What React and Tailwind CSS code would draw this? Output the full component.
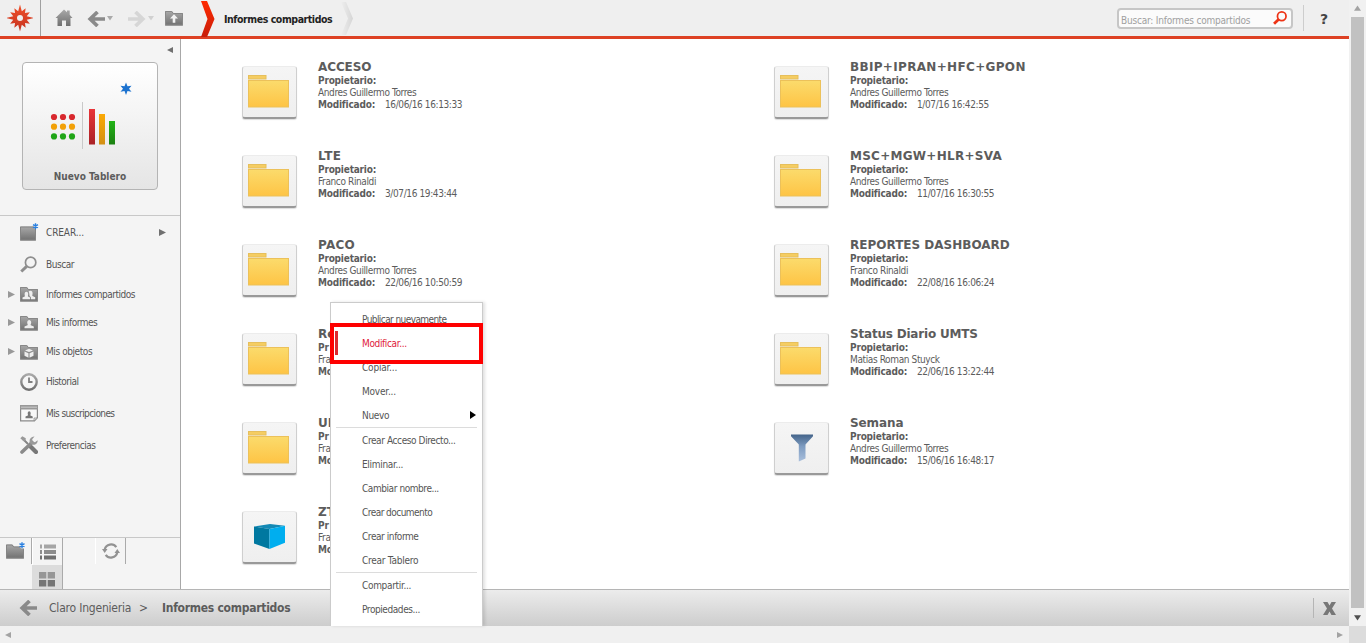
import React from 'react';

const GREY = 'url(#grey)';

function Defs() {
  return (
    <svg width="0" height="0" className="absolute">
      <defs>
        <linearGradient id="grey" x1="0" y1="0" x2="0" y2="1">
          <stop offset="0" stopColor="#a9a9a9" />
          <stop offset="1" stopColor="#707070" />
        </linearGradient>
        <linearGradient id="folder" x1="0" y1="0" x2="0" y2="1">
          <stop offset="0" stopColor="#fbdb6c" />
          <stop offset="1" stopColor="#fec445" />
        </linearGradient>
        <linearGradient id="funnel" x1="0" y1="0" x2="0" y2="1">
          <stop offset="0" stopColor="#44648a" />
          <stop offset="0.45" stopColor="#7f9dc2" />
          <stop offset="1" stopColor="#a9bfdc" />
        </linearGradient>
        <linearGradient id="chev" x1="0" y1="0" x2="0" y2="1">
          <stop offset="0" stopColor="#ff2a00" />
          <stop offset="1" stopColor="#c81e0a" />
        </linearGradient>
        <linearGradient id="chevGrey" x1="0" y1="0" x2="1" y2="0">
          <stop offset="0" stopColor="#eeeeee" />
          <stop offset="1" stopColor="#d6d6d6" />
        </linearGradient>
        <linearGradient id="logo" x1="0" y1="0" x2="0" y2="1">
          <stop offset="0" stopColor="#f0502a" />
          <stop offset="1" stopColor="#c5321f" />
        </linearGradient>
        <linearGradient id="barRed" x1="0" y1="0" x2="0" y2="1">
          <stop offset="0" stopColor="#e93439" />
          <stop offset="1" stopColor="#a92226" />
        </linearGradient>
        <linearGradient id="barOrange" x1="0" y1="0" x2="0" y2="1">
          <stop offset="0" stopColor="#fba905" />
          <stop offset="1" stopColor="#d39015" />
        </linearGradient>
        <linearGradient id="barGreen" x1="0" y1="0" x2="0" y2="1">
          <stop offset="0" stopColor="#22b416" />
          <stop offset="1" stopColor="#1c8012" />
        </linearGradient>
      </defs>
    </svg>
  );
}

const starPoints = (n, cx, cy, outer, inner) =>
  Array.from({ length: n * 2 }, (_, i) => {
    const r = i % 2 ? inner : i % 6 ? outer * 0.84 : outer;
    const a = (Math.PI * i) / n - Math.PI / 2;
    return `${(cx + r * Math.cos(a)).toFixed(2)},${(cy + r * Math.sin(a)).toFixed(2)}`;
  }).join(' ');

function Logo() {
  return (
    <svg width="26" height="28" viewBox="0 0 26 28">
      <polygon points={starPoints(12, 13, 14, 13.5, 7)} fill="url(#logo)" />
      <circle cx="13" cy="14" r="3" fill="#efefef" />
    </svg>
  );
}

function HomeIcon() {
  return (
    <svg width="18" height="18" viewBox="0 0 18 18">
      <path d="M9 .5 12 3.300V1.500h2.700v4.300L17.500 9H15.500v8H11v-5.500H7V17H2.500V9H.5z" fill={GREY} />
    </svg>
  );
}

function ArrowIcon({ flip, color = '#8a8a8a' }) {
  return (
    <svg width="18" height="16" viewBox="0 0 18 16" className={flip ? 'scale-x-[-1]' : ''}>
      <path d="M10.500 1 3.200 8l7.300 7M3.500 8H18" fill="none" stroke={color} strokeWidth="3.700" />
    </svg>
  );
}

function Triangle({ dir, className, size = 6 }) {
  const d = {
    left: 'M6 0v6L0 3z',
    right: 'M0 0v6l6-3z',
    down: 'M0 1h6L3 5.500z',
    up: 'M0 5h6L3 .5z',
  }[dir];
  return (
    <svg width={size} height={size} viewBox="0 0 6 6" preserveAspectRatio="none" className={className}>
      <path d={d} fill="currentColor" />
    </svg>
  );
}

function FolderShape({ children }) {
  return (
    <svg width="18" height="16" viewBox="0 0 18 16">
      <path d="M0 1h7l1.500 2H18v12.500H0z" fill={GREY} />
      <path d="M.5 15V1.500h6.200l1.600 2h9.200V15z" fill="none" stroke="#888" />
      {children}
    </svg>
  );
}

const Spark = ({ x, y }) => (
  <path d={`M${x} ${y - 3}v6M${x - 2.5} ${y - 1.5}l5 3M${x + 2.5} ${y - 1.5}l-5 3`} stroke="#2a80e0" strokeWidth="1.400" fill="none" />
);

const CreateIcon = () => (
  <svg width="19" height="18" viewBox="0 0 19 18">
    <path d="M0 3.500h16V17.500H0z" fill={GREY} />
    <path d="M.5 4v13h15V4z" fill="none" stroke="#858585" />
    <path d="M13 0h6v6h-4z" fill="#f4f4f4" />
    <Spark x={15.5} y={3.2} />
  </svg>
);

const NewFolderIcon = () => (
  <svg width="20" height="18" viewBox="0 0 20 18">
    <path d="M0 2.500h6.500l1.500 2H18v12H0z" fill={GREY} />
    <path d="M.5 16V3h5.700l1.500 2H17.500v11z" fill="none" stroke="#858585" />
    <path d="M12.500 0h7.500v6.500h-5z" fill="#f4f4f4" />
    <Spark x={16} y={3.2} />
  </svg>
);

const Magnifier = ({ size, color, w = 2 }) => (
  <svg width={size} height={size} viewBox="0 0 16 16">
    <circle cx="10" cy="6" r="4.900" fill="none" stroke={color} strokeWidth={w} />
    <path d="M6.300 9.800 1.200 14.600" stroke={color} strokeWidth={w + 1.2} />
  </svg>
);

const SharedIcon = () => (
  <FolderShape>
    <path d="M2.500 13.300v-1.700l2.200-1.100c.5-.4-.1-1-.1-2.300 0-3.200 3.600-3.200 3.600 0 0 1.300-.6 1.900-.1 2.300l1.900 1.100v1.700z" fill="#eee" />
    <path d="M10.800 13.300v-2.200L9.300 10c.5-.5.100-.9 0-2.300-.1-1.200-.4-1.600-.7-2 .8-1.500 4-1.400 4 1.500 0 1.400-.6 2.200-.1 2.700l2.700 1.400v2z" fill="#eee" />
  </FolderShape>
);
const MineIcon = () => (
  <FolderShape>
    <path d="M4.500 13.300v-1.800l3-1.300c.7-.5-.3-1.200-.3-2.600 0-3.400 4-3.400 4 0 0 1.400-1 2.100-.4 2.600l3 1.300v1.800z" fill="#eee" />
  </FolderShape>
);
const ObjectsIcon = () => (
  <FolderShape>
    <path d="m5 6.500 4-1.700 4 1.700-4 1.600zM4.500 7.600l4 1.600v4.500l-4-2zM13.500 7.600l-4 1.600v4.500l4-2z" fill="#eee" />
  </FolderShape>
);
const ClockIcon = () => (
  <svg width="18" height="18" viewBox="0 0 18 18">
    <circle cx="9" cy="9" r="7.700" fill="#f6f6f6" stroke={GREY} strokeWidth="2.400" />
    <path d="M9 4.500V9h3.500" fill="none" stroke="#808080" strokeWidth="1.800" />
  </svg>
);
const SubsIcon = () => (
  <svg width="18" height="17" viewBox="0 0 18 17">
    <path d="M.6.6h16.800v12l-3 3.300H.6z" fill="#f8f8f8" stroke="#8a8a8a" strokeWidth="1.200" />
    <path d="M0 0h18v4.500H0z" fill="#999" />
    <path d="M1 1.500h16v1.500H1z" fill="#bbb" />
    <path d="M14 16v-3h3.500z" fill="#ddd" stroke="#8a8a8a" strokeWidth=".7" />
    <path d="M5.500 13.200v-1.600l2.300-1c.6-.5-.1-1-.1-2.200 0-2.800 3-2.800 3 0 0 1.200-.7 1.700-.2 2.200l2.200 1v1.600z" fill="#777" />
  </svg>
);
const ToolsIcon = () => (
  <svg width="18" height="18" viewBox="0 0 18 18">
    <path d="M3 3l5 5M9.500 9.500l6 6" stroke="#858585" strokeWidth="2" />
    <path d="M11 11l5 5" stroke="#777" strokeWidth="4.200" strokeLinecap="round" />
    <path d="M.3 2.300 2.300.3l3.500 2-.3 2.200-2 .8z" fill="#999" />
    <path d="M2 16 12 6.500" stroke="#8a8a8a" strokeWidth="3.600" strokeLinecap="round" />
    <path d="M14.500.6A4.600 4.600 0 0 0 9.600 6c.3 2.400 4.800 3.800 7 1.400.8-.8 1.200-2 1-3.200L15 6.300l-2.400-.8-.4-2.300z" fill="#999" />
  </svg>
);

const navItems = [
  { label: 'CREAR...', Icon: CreateIcon, h: 'h-8', t: 'tracking-[-0.12px]', more: true },
  { label: 'Buscar', Icon: () => <Magnifier size={17} color="#8e8e8e" w={1.6} />, h: 'h-8', t: 'tracking-[-0.45px]' },
  { label: 'Informes compartidos', Icon: SharedIcon, h: 'h-7', t: 'tracking-[-0.47px]', open: true },
  { label: 'Mis informes', Icon: MineIcon, h: 'h-[29px]', t: 'tracking-[-0.5px]', open: true },
  { label: 'Mis objetos', Icon: ObjectsIcon, h: 'h-[29px]', t: 'tracking-[-0.42px]', open: true },
  { label: 'Historial', Icon: ClockIcon, h: 'h-[31px]', t: 'tracking-[-0.53px]' },
  { label: 'Mis suscripciones', Icon: SubsIcon, h: 'h-8', t: 'tracking-[-0.6px]' },
  { label: 'Preferencias', Icon: ToolsIcon, h: 'h-8', t: 'tracking-[-0.5px]' },
];

const Dashboard = () => (
  <svg width="86" height="72" viewBox="0 0 86 72">
    <polygon points="76,0.500 77.500,4.300 81.500,3.700 79,6.700 81.500,9.700 77.500,9.100 76,13 74.500,9.100 70.500,9.700 73,6.700 70.500,3.700 74.500,4.300" fill="#1c72cf" />
    {['#d8282e', '#f2a007', '#20a517'].map((c, r) =>
      [0, 1, 2].map((k) => <circle key={`${r}-${k}`} cx={4 + k * 9} cy={35 + r * 9.7} r="3.100" fill={c} />)
    )}
    <path d="M32.500 20v47" stroke="#c9c9c9" />
    <rect x="39" y="27" width="6" height="35.500" fill="url(#barRed)" />
    <rect x="49" y="32" width="6" height="30.500" fill="url(#barOrange)" />
    <rect x="59" y="39" width="6" height="23.500" fill="url(#barGreen)" />
  </svg>
);

function Header() {
  return (
    <header className="flex h-[39px] shrink-0 items-center border-b-[3px] border-[#dd4124] bg-[#efefef]">
      <div className="flex h-full w-[41px] items-center justify-center border-r border-[#a0a0a0]">
        <Logo />
      </div>
      <div className="flex h-full items-center pl-[14px]">
        <HomeIcon />
        <div className="ml-[14px] flex items-center pt-px"><ArrowIcon /></div>
        <Triangle dir="down" className="ml-[2px] text-[#aaa]" />
        <div className="ml-[15px] flex items-center pt-px"><ArrowIcon flip color="#d6d6d6" /></div>
        <Triangle dir="down" className="ml-[2px] text-[#d0d0d0]" />
        <div className="ml-[11px] flex">
          <FolderShape>
            <path d="M9 4.300 13 8.500h-2.700v4.300H7.700V8.500H5z" fill="#f2f2f2" />
          </FolderShape>
        </div>
      </div>
      <svg width="15" height="36" viewBox="0 0 15 35" preserveAspectRatio="none" className="ml-[17px] mt-px">
        <path d="M1 0h6l7.500 17.500L7 35H1l6.500-17.500z" fill="url(#chev)" />
      </svg>
      <span className="ml-[9px] w-[109px] whitespace-nowrap pt-[3px] text-[10.5px] font-bold tracking-[-0.44px] text-[#222]">Informes compartidos</span>
      <svg width="14" height="35" viewBox="0 0 14 35" className="ml-[7px]">
        <path d="M1 1h5l7 16.500L6 34H1l7-16.500z" fill="url(#chevGrey)" />
      </svg>
      <div className="ml-auto flex h-[21px] w-[176px] items-center justify-between rounded-[4px] border-2 border-[#c6c6c6] bg-[#fbfbfb] pl-[2px] pr-1">
        <span className="whitespace-nowrap pt-[4px] text-[10px] tracking-[-0.2px] text-[#a0a0a0]">Buscar: Informes compartidos</span>
        <Magnifier size={14} color="#ee3416" w={2} />
      </div>
      <div className="ml-[10px] h-[26px] w-px bg-[#cdcdcd]" />
      <span className="w-[45px] pl-[16px] pt-[2px] font-['DejaVu_Sans'] text-[14px] font-bold text-[#444]">?</span>
    </header>
  );
}

function Sidebar() {
  return (
    <aside className="flex w-[181px] shrink-0 flex-col border-r border-[#a8a8a8] bg-[#f4f4f4]">
      <div className="flex h-[23px] justify-end pr-[7px] pt-2"><Triangle dir="left" className="text-[#707070]" /></div>
      <div className="mx-[22px] flex h-[128px] w-[136px] shrink-0 flex-col items-center rounded-[4px] border border-[#b4b4b4] bg-linear-to-b from-white to-[#e5e5e5]">
        <div className="mt-[19px] pl-[6px]"><Dashboard /></div>
        <span className="mt-[16px] text-[10px] leading-[14px] font-bold text-[#5c5c5c]">Nuevo Tablero</span>
      </div>
      <nav className="mt-[25px] flex flex-1 flex-col border-t border-[#c8c8c8]">
        {navItems.map(({ label, Icon, h, t, open, more }) => (
          <div key={label} className={`flex items-center ${h}`}>
            <div className="flex w-5 shrink-0 pl-2">{open && <Triangle dir="right" className="text-[#999]" size={7} />}</div>
            <div className="flex w-[26px] shrink-0">
              <Icon />
            </div>
            <span className={`flex-1 text-[10px] text-[#555] ${t}`}>{label}</span>
            {more && <Triangle dir="right" className="mr-[14px] text-[#707070]" size={7} />}
          </div>
        ))}
      </nav>
      <div className="flex h-[52px] shrink-0 border-t border-[#c8c8c8]">
        <div className="flex h-[26px] w-8 items-center border-r border-[#aaa] pl-[6px]"><NewFolderIcon /></div>
        <div className="flex w-[31px] flex-col border-r border-[#aaa]">
          <div className="flex h-[27px] items-center justify-center border-l border-white">
            <svg width="16" height="16" viewBox="0 0 16 16">
              {[0, 5.5, 11].map((y, i) => (
                <g key={y} fill={['#a5a5a5', '#8c8c8c', '#707070'][i]}>
                  <rect y={y + 0.5} width="2" height="4" />
                  <rect x="4" y={y + 0.5} width="12" height="4" />
                </g>
              ))}
            </svg>
          </div>
          <div className="flex flex-1 items-center justify-center bg-[#dcdcdc] pt-[4px]">
            <svg width="16" height="15" viewBox="0 0 16 15">
              <path d="M0 0h7.300v6.500H0zM8.700 0H16v6.500H8.700z" fill="#969696" />
              <path d="M0 8h7.300v6.500H0zM8.700 8H16v6.500H8.700z" fill="#757575" />
            </svg>
          </div>
        </div>
        <div className="ml-8 flex h-[26px] w-[31px] items-center justify-center border-l border-r border-l-white border-r-[#aaa]">
          <svg width="18" height="16" viewBox="0 0 18 16">
            <path d="M2.700 6.500a6.500 6.500 0 0 1 11.600-2.300M15.300 9.500a6.500 6.500 0 0 1-11.600 2.300" fill="none" stroke="#929292" strokeWidth="2.200" />
            <path d="M0 6h5.500L2.700 10zM12.500 10H18l-2.700-4z" fill="#929292" />
          </svg>
        </div>
      </div>
    </aside>
  );
}

const glyphs = {
  folder: (
    <svg width="41" height="33" viewBox="0 0 41 33" className="mb-[2px] mr-[2px]">
      <rect x=".5" y=".5" width="17.500" height="3.500" fill="#f5cd62" stroke="#e6bf5c" />
      <rect x=".5" y="5.500" width="40" height="26.500" fill="url(#folder)" stroke="#ecc15a" />
    </svg>
  ),
  funnel: (
    <svg width="22" height="28" viewBox="0 0 22 28">
      <path d="M0 .5h22v1.800L14.500 10.500V24.500L7.800 27.500V10.500L0 2.300z" fill="url(#funnel)" />
    </svg>
  ),
  cube: (
    <svg width="31" height="25" viewBox="0 0 31 25" className="mb-[2px]">
      <path d="M0 2.500 16 0l15 1.800L15.500 5z" fill="#1389b5" />
      <path d="M0 2.500 15.500 5v20L0 19.500z" fill="#0078a0" />
      <path d="M15.500 5 31 1.800v17L15.500 25z" fill="#00aeef" />
    </svg>
  ),
};

const left = [
  { title: 'ACCESO', owner: 'Andres Guillermo Torres', date: '16/06/16 16:13:33', t: 'tracking-[-0.1px]' },
  { title: 'LTE', owner: 'Franco Rinaldi', date: '3/07/16 19:43:44', t: 'tracking-[0.5px]' },
  { title: 'PACO', owner: 'Andres Guillermo Torres', date: '22/06/16 10:50:59', t: 'tracking-[0.2px]' },
  { title: 'Re', owner: 'Fra', clipped: true },
  { title: 'UI', owner: 'Fra', clipped: true },
  { title: 'ZT', owner: 'Fra', kind: 'cube', clipped: true },
];
const right = [
  { title: 'BBIP+IPRAN+HFC+GPON', owner: 'Andres Guillermo Torres', date: '1/07/16 16:42:55', t: 'tracking-[0.33px]' },
  { title: 'MSC+MGW+HLR+SVA', owner: 'Andres Guillermo Torres', date: '11/07/16 16:30:55', t: 'tracking-[0.27px]' },
  { title: 'REPORTES DASHBOARD', owner: 'Franco Rinaldi', date: '22/08/16 16:06:24', t: '' },
  { title: 'Status Diario UMTS', owner: 'Matias Roman Stuyck', date: '22/06/16 13:22:44', t: 'tracking-[-0.2px]' },
  { title: 'Semana', owner: 'Andres Guillermo Torres', date: '15/06/16 16:48:17', t: 'tracking-[-0.1px]', kind: 'funnel' },
];

function Entry({ item: { title, owner, date, t = '', kind = 'folder', clipped } }) {
  return (
    <div className="flex h-[89px] items-start">
      <div className="mt-[7px] flex h-[53px] w-[55px] items-center justify-center rounded-[3px] border border-b-2 border-[#cfcfcf] border-b-[#999] border-t-[#ececec] bg-linear-to-b from-[#f5f5f5] to-[#efefef] shadow-[0_1px_1px_#ddd]">
        {glyphs[kind]}
      </div>
      <div className={`ml-[21px] whitespace-nowrap text-[10px] leading-3 text-[#5c5c5c] ${clipped ? 'w-3 overflow-hidden' : ''}`}>
        <div className={`font-['DejaVu_Sans'] text-[12px] leading-[16px] font-bold ${t}`}>{title}</div>
        <div className="font-bold tracking-[-0.2px]">{clipped ? 'Pr' : 'Propietario:'}</div>
        <div className="tracking-[-0.38px]">{owner}</div>
        <div className="flex">
          <span className="w-[67px] shrink-0 font-bold tracking-[-0.2px]">{clipped ? 'Mo' : 'Modificado:'}</span>
          {date && <span className="tracking-[-0.38px]">{date}</span>}
        </div>
      </div>
    </div>
  );
}

const menuGroups = [
  [
    ['Publicar nuevamente', 'tracking-[-0.58px]'],
    ['Modificar...', 'tracking-[-0.36px]'],
    ['Copiar...', 'tracking-[-0.2px]'],
    ['Mover...', 'tracking-[-0.2px]'],
    ['Nuevo', 'tracking-[-0.31px]'],
  ],
  [
    ['Crear Acceso Directo...', 'tracking-[-0.4px]'],
    ['Eliminar...', 'tracking-[-0.31px]'],
    ['Cambiar nombre...', 'tracking-[-0.43px]'],
    ['Crear documento', 'tracking-[-0.54px]'],
    ['Crear informe', 'tracking-[-0.43px]'],
    ['Crear Tablero', 'tracking-[-0.25px]'],
  ],
  [
    ['Compartir...', 'tracking-[-0.31px]'],
    ['Propiedades...', 'tracking-[-0.42px]'],
  ],
];

function ContextMenu() {
  return (
    <div className="absolute left-[330px] top-[302px] h-[324px] w-[153px] border border-b-0 border-[#cbcbcb] bg-white pt-1 shadow-[2px_0_3px_rgba(0,0,0,0.12)]">
      {menuGroups.map((group, g) => (
        <div key={g} className={g ? "before:mx-[5px] before:block before:h-px before:bg-[#dcdcdc] before:content-['']" : ''}>
          {group.map(([label, t]) => (
            <div
              key={label}
              className={`flex h-6 items-center justify-between pl-[31px] pr-[6px] text-[10px] ${t} ${label === 'Modificar...' ? 'text-[#e0203c]' : 'text-[#555]'}`}
            >
              <span>{label}</span>
              {label === 'Nuevo' && (
                <svg width="6" height="8" viewBox="0 0 6 8"><path d="M0 0v8l6-4z" fill="#000" /></svg>
              )}
            </div>
          ))}
        </div>
      ))}
      <div className="absolute left-[4px] top-[28px] h-6 w-[3px] bg-[#dc2a30]" />
      <div className="absolute -left-px top-5 h-[41px] w-[153px] border-4 border-[#fe0000]" />
    </div>
  );
}

export default function App() {
  return (
    <div className="relative flex h-[643px] w-[1366px] flex-col overflow-hidden bg-white font-['DejaVu_Sans_Condensed','DejaVu_Sans',sans-serif]">
      <Defs />
      <div className="flex h-[626px]">
        <div className="flex w-[1349px] flex-col">
          <Header />
          <div className="flex h-[550px]">
            <Sidebar />
            <main className="flex pl-[61px] pt-[20px]">
              <div className="w-[532px]">{left.map((i) => <Entry key={i.title} item={i} />)}</div>
              <div>{right.map((i) => <Entry key={i.title} item={i} />)}</div>
            </main>
          </div>
          <footer className="flex h-[37px] items-center border-t border-[#b5b5b5] bg-linear-to-b from-[#ececec] to-[#cdcdcd] text-[12px] text-[#5c5c5c]">
            <div className="flex w-[49px] pl-[19px]"><ArrowIcon color="#8a8a8a" /></div>
            <span className="w-[90px] whitespace-nowrap tracking-[-0.2px]">Claro Ingenieria</span>
            <span className="w-[23px]">&gt;</span>
            <span className="whitespace-nowrap font-bold tracking-[-0.27px]">Informes compartidos</span>
            <div className="ml-auto h-5 w-px bg-[#b5b5b5]" />
            <svg width="13" height="13" viewBox="0 0 13 13" className="ml-[9px] mr-[13px]">
              <path d="M0 0h4.500l2 3.500 2-3.500H13L9 6.500l4 6.500H8.500l-2-3.500-2 3.500H0l4-6.500z" fill="#777" />
            </svg>
          </footer>
        </div>
        <div className="flex w-[17px] flex-col items-center bg-[#f1f1f1]">
          <div className="flex h-[17px] items-center"><Triangle dir="up" className="text-[#a3a3a3]" size={7} /></div>
          <div className="h-[591px] w-[13px] bg-[#c1c1c1]" />
          <div className="flex flex-1 items-center"><Triangle dir="down" className="text-[#505050]" size={7} /></div>
        </div>
      </div>
      <div className="flex h-[17px] items-center bg-[#f0f0f0] pl-[5px]">
        <Triangle dir="left" className="text-[#a3a3a3]" />
        <Triangle dir="right" className="ml-auto mr-[6px] text-[#a3a3a3]" />
        <div className="h-full w-[17px] bg-[#dcdcdc]" />
      </div>
      <ContextMenu />
    </div>
  );
}
